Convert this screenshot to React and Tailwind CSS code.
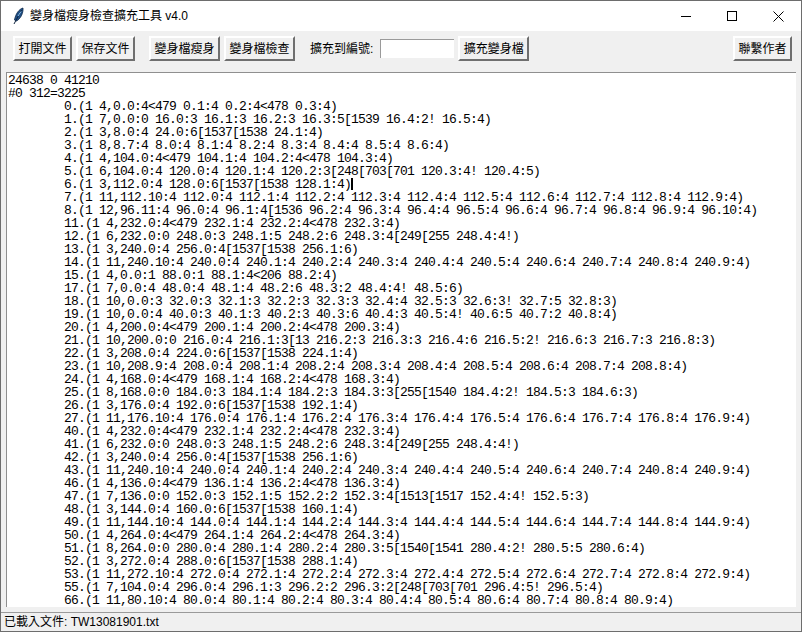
import React from "react";

const rep = (prefix, base, first) => {
    const parts = [`${base}.${first}:4`];
    for (let i = 0; i < first; i++) parts.push(`${base}.${i}:4`);
    return `${prefix},${parts.join(" ")})`;
};

const lines = [
    "24638 0 41210",
    "#0 312=3225",
    "\t0.(1 4,0.0:4<479 0.1:4 0.2:4<478 0.3:4)",
    "\t1.(1 7,0.0:0 16.0:3 16.1:3 16.2:3 16.3:5[1539 16.4:2! 16.5:4)",
    "\t2.(1 3,8.0:4 24.0:6[1537[1538 24.1:4)",
    "\t3.(1 8,8.7:4 8.0:4 8.1:4 8.2:4 8.3:4 8.4:4 8.5:4 8.6:4)",
    "\t4.(1 4,104.0:4<479 104.1:4 104.2:4<478 104.3:4)",
    "\t5.(1 6,104.0:4 120.0:4 120.1:4 120.2:3[248[703[701 120.3:4! 120.4:5)",
    "\t6.(1 3,112.0:4 128.0:6[1537[1538 128.1:4)",
    rep("\t7.(1 11", 112, 10),
    "\t8.(1 12,96.11:4 96.0:4 96.1:4[1536 96.2:4 96.3:4 96.4:4 96.5:4 96.6:4 96.7:4 96.8:4 96.9:4 96.10:4)",
    "\t11.(1 4,232.0:4<479 232.1:4 232.2:4<478 232.3:4)",
    "\t12.(1 6,232.0:0 248.0:3 248.1:5 248.2:6 248.3:4[249[255 248.4:4!)",
    "\t13.(1 3,240.0:4 256.0:4[1537[1538 256.1:6)",
    rep("\t14.(1 11", 240, 10),
    "\t15.(1 4,0.0:1 88.0:1 88.1:4<206 88.2:4)",
    "\t17.(1 7,0.0:4 48.0:4 48.1:4 48.2:6 48.3:2 48.4:4! 48.5:6)",
    "\t18.(1 10,0.0:3 32.0:3 32.1:3 32.2:3 32.3:3 32.4:4 32.5:3 32.6:3! 32.7:5 32.8:3)",
    "\t19.(1 10,0.0:4 40.0:3 40.1:3 40.2:3 40.3:6 40.4:3 40.5:4! 40.6:5 40.7:2 40.8:4)",
    "\t20.(1 4,200.0:4<479 200.1:4 200.2:4<478 200.3:4)",
    "\t21.(1 10,200.0:0 216.0:4 216.1:3[13 216.2:3 216.3:3 216.4:6 216.5:2! 216.6:3 216.7:3 216.8:3)",
    "\t22.(1 3,208.0:4 224.0:6[1537[1538 224.1:4)",
    rep("\t23.(1 10", 208, 9),
    "\t24.(1 4,168.0:4<479 168.1:4 168.2:4<478 168.3:4)",
    "\t25.(1 8,168.0:0 184.0:3 184.1:4 184.2:3 184.3:3[255[1540 184.4:2! 184.5:3 184.6:3)",
    "\t26.(1 3,176.0:4 192.0:6[1537[1538 192.1:4)",
    rep("\t27.(1 11", 176, 10),
    "\t40.(1 4,232.0:4<479 232.1:4 232.2:4<478 232.3:4)",
    "\t41.(1 6,232.0:0 248.0:3 248.1:5 248.2:6 248.3:4[249[255 248.4:4!)",
    "\t42.(1 3,240.0:4 256.0:4[1537[1538 256.1:6)",
    rep("\t43.(1 11", 240, 10),
    "\t46.(1 4,136.0:4<479 136.1:4 136.2:4<478 136.3:4)",
    "\t47.(1 7,136.0:0 152.0:3 152.1:5 152.2:2 152.3:4[1513[1517 152.4:4! 152.5:3)",
    "\t48.(1 3,144.0:4 160.0:6[1537[1538 160.1:4)",
    rep("\t49.(1 11", 144, 10),
    "\t50.(1 4,264.0:4<479 264.1:4 264.2:4<478 264.3:4)",
    "\t51.(1 8,264.0:0 280.0:4 280.1:4 280.2:4 280.3:5[1540[1541 280.4:2! 280.5:5 280.6:4)",
    "\t52.(1 3,272.0:4 288.0:6[1537[1538 288.1:4)",
    rep("\t53.(1 11", 272, 10),
    "\t55.(1 7,104.0:4 296.0:4 296.1:3 296.2:2 296.3:2[248[703[701 296.4:5! 296.5:4)",
    rep("\t66.(1 11", 80, 10),
];

const TkButton = ({ children, className = "" }) => (
    <button
        className={`h-[25px] shrink-0 border-2 border-t-white border-l-white border-b-[#6f6f6f] border-r-[#6f6f6f] bg-[#f0f0f0] text-[12px] leading-none text-black ${className}`}
    >
        {children}
    </button>
);

export default function App() {
    return (
        <div
            className="flex h-[632px] w-[802px] flex-col overflow-hidden border border-[#6d6d6d] bg-[#f0f0f0] text-black"
            style={{ fontFamily: '"Liberation Sans", "Noto Sans CJK TC", sans-serif' }}
        >
            {/* Title bar */}
            <div className="flex h-[30px] shrink-0 items-center bg-white">
                <svg width="14" height="18" viewBox="0 0 14 18" className="ml-[11px]">
                    <path d="M11 1 C7 2 3.5 7 2.5 13 L4.5 14 C8.5 12 11.5 6 11 1Z" fill="#1f4f86" stroke="#0d2747" strokeWidth="0.8" />
                    <path d="M9.5 3 L2 17" stroke="#10243f" strokeWidth="1" fill="none" />
                    <path d="M9 4.5 L6 9" stroke="#8fc4ee" strokeWidth="1" fill="none" />
                </svg>
                <span className="ml-[4px] text-[12px] leading-none">變身檔瘦身檢查擴充工具 v4.0</span>
                <div className="ml-auto flex items-center">
                    <div className="flex h-[30px] w-[46px] items-center justify-center">
                        <div className="h-px w-[10px] bg-black" />
                    </div>
                    <div className="flex h-[30px] w-[46px] items-center justify-center">
                        <div className="size-[10px] border border-black" />
                    </div>
                    <div className="flex h-[30px] w-[46px] items-center justify-center">
                        <svg width="11" height="11" viewBox="0 0 11 11">
                            <path d="M0.5 0.5 L10.5 10.5 M10.5 0.5 L0.5 10.5" stroke="#000" strokeWidth="1" />
                        </svg>
                    </div>
                </div>
            </div>

            {/* Toolbar */}
            <div className="flex h-[41px] shrink-0 items-start pl-[12px] pr-[9px] pt-[5px]">
                <TkButton className="w-[59px]">打開文件</TkButton>
                <TkButton className="ml-[4px] w-[59px]">保存文件</TkButton>
                <TkButton className="ml-[14px] w-[71px]">變身檔瘦身</TkButton>
                <TkButton className="ml-[4px] w-[71px]">變身檔檢查</TkButton>
                <span className="ml-[15px] mt-[7px] text-[12px] leading-none">擴充到編號:</span>
                <div className="ml-[7px] mt-[3px] h-[19px] w-[74px] border-t border-l border-[#9a9a9a] bg-white" />
                <TkButton className="ml-[4px] w-[71px]">擴充變身檔</TkButton>
                <TkButton className="ml-auto w-[59px]">聯繫作者</TkButton>
            </div>

            {/* Text area */}
            <div
                className="mx-[5px] h-[535px] shrink-0 overflow-hidden border-t border-l border-[#8f8f8f] bg-white pl-[1px] pt-[1px] text-[13px] leading-[13px] tracking-[-0.8px] text-black"
                style={{ fontFamily: '"Liberation Mono", monospace', tabSize: 8 }}
            >
                {lines.map((line, i) => (
                    <div key={i} className="h-[13px] whitespace-pre">
                        {line}
                        {i === 8 && <span className="inline-block h-[12px] w-[2px] bg-black align-top" />}
                    </div>
                ))}
            </div>

            {/* Status bar */}
            <div className="mt-[5px] flex flex-1 items-center border-t border-[#9a9a9a] pl-[3px] text-[12px] leading-none">
                已載入文件: TW13081901.txt
            </div>
        </div>
    );
}
